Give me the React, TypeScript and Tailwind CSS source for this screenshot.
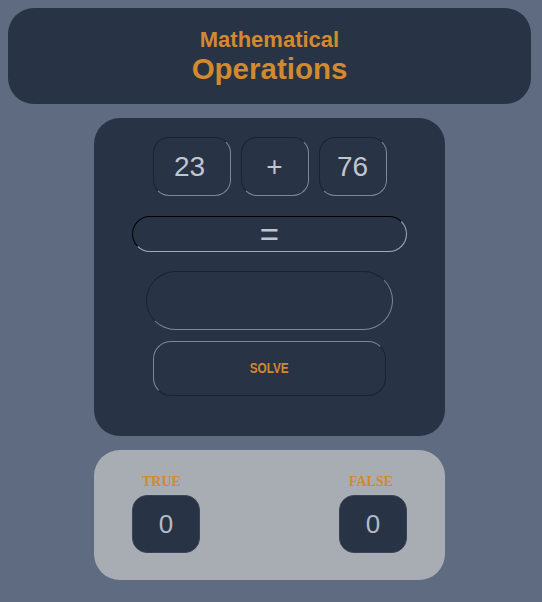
const inset =
  'border border-t-[#1b2231] border-l-[#1b2231] border-b-[#7f8899] border-r-[#7f8899]'

export default function App() {
  return (
    <div className="min-h-[602px] w-full bg-[#5e6b80] pt-2 font-['Liberation_Sans',Arial,sans-serif]">
      <div className="flex w-[539px] flex-col items-center">
        <header className="flex h-[96px] w-[523px] flex-col items-center justify-center rounded-[26px] bg-[#283345] font-bold text-[#d3892e]">
          <h2 className="text-[22px] leading-[26px]">Mathematical</h2>
          <h1 className="text-[29.5px] leading-[32px]">Operations</h1>
        </header>

        <main className="mt-[14px] flex h-[318px] w-[351px] flex-col items-center rounded-[26px] bg-[#283345] pt-[19px]">
          <div className="flex gap-[10px] text-[28px] text-[#c1c5ce]">
            <div className={`flex h-[59px] w-[78px] items-center justify-center rounded-[16px] pr-1 ${inset}`}>23</div>
            <div className={`flex h-[59px] w-[68px] items-center justify-center rounded-[16px] ${inset}`}>+</div>
            <div className={`flex h-[59px] w-[68px] items-center justify-center rounded-[16px] ${inset}`}>76</div>
          </div>
          <div className="mt-[20px] flex h-[36px] w-[275px] items-center justify-center rounded-full border border-t-black border-l-black border-b-[#a3abb8] border-r-[#a3abb8] text-[33px] leading-none text-[#c1c5ce]">
            =
          </div>
          <div className={`mt-[19px] h-[59px] w-[247px] rounded-full ${inset}`} />
          <button className="mt-[11px] flex h-[55px] w-[233px] items-center justify-center rounded-[18px] border border-t-[#7f8899] border-l-[#7f8899] border-b-[#1b2231] border-r-[#1b2231] text-[14px] font-bold text-[#d3892e]">
            <span className="inline-block scale-x-[0.84]">SOLVE</span>
          </button>
        </main>

        <section className="mt-[14px] flex h-[130px] w-[351px] justify-between rounded-[26px] bg-[#a8acb3] px-[38px] pt-[22px]">
          {['TRUE', 'FALSE'].map((label) => (
            <div key={label} className="flex flex-col">
              <span className="ml-[10px] font-['Liberation_Serif',serif] text-[14px] font-bold leading-[20px] text-[#d3892e]">
                {label}
              </span>
              <div className="mt-[3px] flex h-[58px] w-[68px] items-center justify-center rounded-[15px] border border-[#3a4457] bg-[#283345] text-[26px] text-[#b3bac6]">
                0
              </div>
            </div>
          ))}
        </section>
      </div>
    </div>
  )
}
